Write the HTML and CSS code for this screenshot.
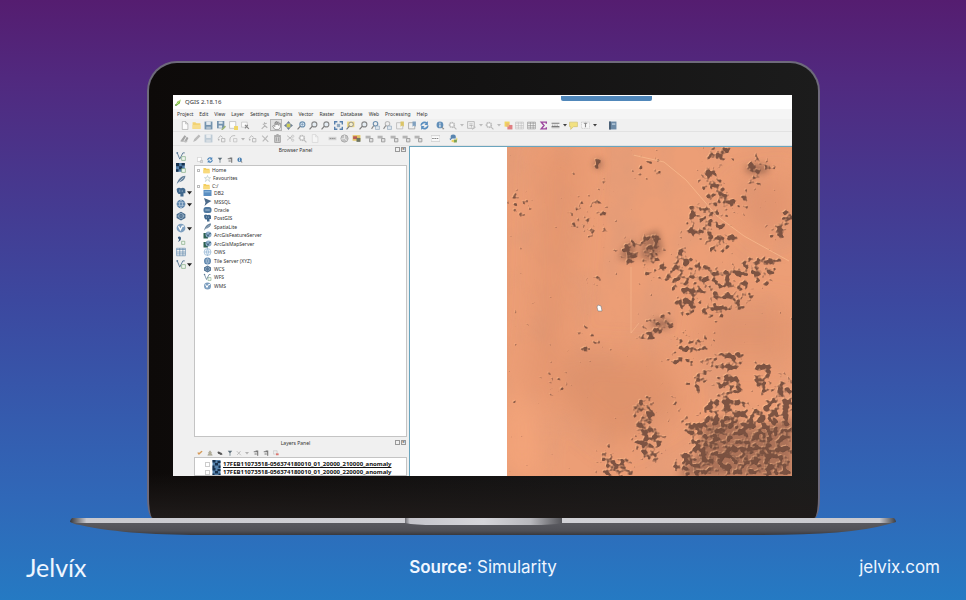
FILE: index.html
```html
<!DOCTYPE html>
<html lang="en">
<head>
<meta charset="utf-8">
<title>QGIS 2.18.16</title>
<link rel="stylesheet" href="styles.css">
</head>
<body>
<svg class="sprite" aria-hidden="true">
  <symbol id="page" viewBox="0 0 16 16"><path d="M4 1h6l4 4v10H4z" fill="#fff" stroke="#8a8a8a"/><path d="M10 1v4h4" fill="none" stroke="#8a8a8a"/></symbol>
  <symbol id="folder" viewBox="0 0 16 16"><path d="M1 2h5l2 2h7v10H1z" fill="#f3cd5c"/><path d="M1 7h14v7H1z" fill="#f8da7c"/></symbol>
  <symbol id="save" viewBox="0 0 16 16"><path d="M1 1h14v14H1z" fill="#5f83a3"/><path d="M4 1h8v6H4z" fill="#dfe8ef"/><path d="M4 10h8v4H4z" fill="#a9bccb"/></symbol>
  <symbol id="saveas" viewBox="0 0 16 16"><path d="M0 0h13v13H0z" fill="#5f83a3"/><path d="M3 1h7v4H3zM3 8h6v4H3z" fill="#dfe8ef"/><path d="M8 14l6-6 2 2-6 6H8z" fill="#8fa861"/></symbol>
  <symbol id="newcomp" viewBox="0 0 16 16"><path d="M1 1h11v12H1z" fill="#fff" stroke="#999"/><path d="M9 9h7v7H9z" fill="#f1d24d"/></symbol>
  <symbol id="addlayer" viewBox="0 0 16 16"><path d="M1 1h11v11H1z" fill="#fff" stroke="#aaa"/><path d="M9 9h6v6H9z" fill="#ddd" stroke="#999"/></symbol>
  <symbol id="compmgr" viewBox="0 0 16 16"><path d="M1 2h10v9H1z" fill="#fff" stroke="#aaa"/><path d="M7 7l7 7M12 7l-5 6" stroke="#777" stroke-width="2"/></symbol>
  <symbol id="touch" viewBox="0 0 16 16"><path d="M8 2v7l-5 5M8 8l5 4M5 6l7-2" fill="none" stroke="#aaa" stroke-width="2"/></symbol>
  <symbol id="hand" viewBox="0 0 16 16"><path d="M5 15L1 9l2-1 2 2V3l2-1v5V1h2v6l1-5h2v6l1-4h2v7l-3 4z" fill="#fff" stroke="#555"/></symbol>
  <symbol id="panto" viewBox="0 0 16 16"><path d="M8 0l4 5H4zM8 16l4-5H4zM0 8l5-4v8zM16 8l-5-4v8z" fill="#5b6f86"/><path d="M5 5h6v6H5z" fill="#c8c83e"/></symbol>
  <symbol id="lens" viewBox="0 0 16 16"><circle cx="9.500" cy="6" r="4.500" fill="#e4edf4" stroke="currentColor" stroke-width="2"/><path d="M6 9l-5 6" stroke="#666" stroke-width="2"/></symbol>
  <symbol id="lensplus" viewBox="0 0 16 16"><circle cx="9.500" cy="6" r="4.500" fill="#dbe8f3" stroke="currentColor" stroke-width="2"/><path d="M6 9l-5 6" stroke="#666" stroke-width="2"/><path d="M7 6h5M9.500 3.500v5" stroke="#4374a0"/></symbol>
  <symbol id="full" viewBox="0 0 16 16"><path d="M1 6V1h5M10 1h5v5M15 10v5h-5M6 15H1v-5" fill="none" stroke="#3d6da2" stroke-width="3"/><path d="M5 5h6v6H5z" fill="#7f9cb8"/></symbol>
  <symbol id="lensbox" viewBox="0 0 16 16"><path d="M2 1h13v10H2z" fill="#efd469"/><circle cx="9" cy="6" r="4" fill="#f7efc9" stroke="#777" stroke-width="1.500"/><path d="M6 9l-5 6" stroke="#666" stroke-width="2"/></symbol>
  <symbol id="lensnode" viewBox="0 0 16 16"><circle cx="8" cy="5" r="4" fill="#eee" stroke="currentColor" stroke-width="2"/><path d="M5 8l-4 6" stroke="#777" stroke-width="2"/><path d="M8 9h7v6H8z" fill="#dce6ee" stroke="#6c8ba8"/></symbol>
  <symbol id="bookmark" viewBox="0 0 16 16"><path d="M1 3h11v11H1z" fill="#f2f2f2" stroke="currentColor" stroke-width="1.500"/><path d="M8 1h6v9l-3-2-3 2z" fill="#d8bd50"/></symbol>
  <symbol id="bookmarks" viewBox="0 0 16 16"><path d="M1 3h11v11H1z" fill="#f2f2f2" stroke="#999" stroke-width="1.500"/><path d="M8 1h6v9l-3-2-3 2z" fill="#6d93b7"/></symbol>
  <symbol id="refresh" viewBox="0 0 16 16"><path d="M2 8a6 6 0 0 1 10-4M14 8a6 6 0 0 1-10 4" fill="none" stroke="#427fb8" stroke-width="3"/><path d="M14 0v7H8zM2 16V9h6z" fill="#427fb8"/></symbol>
  <symbol id="info" viewBox="0 0 16 16"><circle cx="7" cy="7" r="6" fill="#4a7fb0"/><path d="M6 3h2v2H6zM6 6h2v5H6z" fill="#fff"/><path d="M10 9l5 5-3 1z" fill="#777"/></symbol>
  <symbol id="gear" viewBox="0 0 16 16"><circle cx="7" cy="7" r="4.500" fill="#ddd" stroke="currentColor" stroke-width="2.500" stroke-dasharray="3 1"/><circle cx="7" cy="7" r="2" fill="#fff"/><path d="M10 10l5 5" stroke="currentColor" stroke-width="2"/></symbol>
  <symbol id="select" viewBox="0 0 16 16"><path d="M1 1h12v12H1z" fill="#eee" stroke="#aaa" stroke-width="1.500"/><path d="M4 5h6M4 8h5M7 7l8 4-4 1-1 3z" stroke="#999" fill="#fff"/></symbol>
  <symbol id="deselect" viewBox="0 0 16 16"><path d="M1 1h9v9H1z" fill="#f0d046"/><path d="M6 7h9v8H6z" fill="#dd6c70"/><path d="M4 4h5v6H4z" fill="#efb35f"/></symbol>
  <symbol id="table" viewBox="0 0 16 16"><path d="M1 2h14v12H1z" fill="#f4f4f4" stroke="currentColor"/><path d="M1 4h14M1 8h14M1 11h14M6 2v12M11 2v12" stroke="currentColor"/></symbol>
  <symbol id="sigma" viewBox="0 0 16 16"><path d="M13 5V2H4l5 6-5 6h9v-3" fill="none" stroke="#8d278f" stroke-width="2.500"/></symbol>
  <symbol id="measure" viewBox="0 0 16 16"><path d="M1 4h14M1 10h14" stroke="#666" stroke-width="2"/><path d="M1 12h14M3 6v3M7 6v3M11 6v3" stroke="#aaa" stroke-width="2"/></symbol>
  <symbol id="tip" viewBox="0 0 16 16"><path d="M1 2h14v8H8l-5 5v-5H1z" fill="#f2df6f" stroke="#c4b04c"/></symbol>
  <symbol id="text" viewBox="0 0 16 16"><path d="M1 2h14v11H1z" fill="#fafafa" stroke="#aaa" stroke-dasharray="2 1"/><path d="M5 4h6M8 4v7" stroke="#777" stroke-width="2"/></symbol>
  <symbol id="book" viewBox="0 0 16 16"><path d="M2 1h13v14H2z" fill="#56799b"/><path d="M2 1h3v14H2z" fill="#273e57"/><path d="M7 4h6v3H7z" fill="#a6bdd0"/></symbol>
  <symbol id="pencil" viewBox="0 0 16 16"><path d="M2 14l2-5 8-8 3 3-8 8z" fill="currentColor"/></symbol>
  <symbol id="pencils" viewBox="0 0 16 16"><path d="M1 12l7-10 3 2-6 10zM7 14l5-9 3 2-4 8z" fill="#999"/><path d="M1 12h12v2H1z" fill="#bbb"/></symbol>
  <symbol id="node" viewBox="0 0 16 16"><path d="M2 8l4-5 4 3" fill="none" stroke="currentColor" stroke-width="1.500"/><path d="M8 8h6v6H8z" fill="#eee" stroke="currentColor" stroke-width="1.500"/><circle cx="3" cy="10" r="1.500" fill="currentColor"/></symbol>
  <symbol id="curve" viewBox="0 0 16 16"><path d="M2 14C0 6 5 2 11 3" fill="none" stroke="currentColor" stroke-width="1.500"/><path d="M8 8h6v6H8z" fill="#eee" stroke="currentColor"/></symbol>
  <symbol id="cross" viewBox="0 0 16 16"><path d="M2 3l11 11M12 3l-4 5-5 5" stroke="currentColor" stroke-width="2"/></symbol>
  <symbol id="trash" viewBox="0 0 16 16"><path d="M3 4h10v11H3z" fill="#ccc" stroke="#888" stroke-width="1.500"/><path d="M2 3h12M6 1h4M6 6v7M10 6v7" stroke="#888" stroke-width="1.500"/></symbol>
  <symbol id="cut" viewBox="0 0 16 16"><path d="M2 3l9 7M2 11l9-7" stroke="#aaa" stroke-width="1.500"/><circle cx="12" cy="4" r="2" fill="none" stroke="#aaa"/><circle cx="12" cy="11" r="2" fill="none" stroke="#aaa"/></symbol>
  <symbol id="abc" viewBox="0 0 16 16"><path d="M1 5h14v6H1z" fill="#ccc"/><path d="M3 8h10" stroke="#888" stroke-width="2" stroke-dasharray="3 1"/></symbol>
  <symbol id="pie" viewBox="0 0 16 16"><circle cx="8" cy="8" r="6.500" fill="#bbb" stroke="#888"/><path d="M8 8V2M8 8l5 4M8 8l-6 1" stroke="#eee" stroke-width="1.500"/></symbol>
  <symbol id="label" viewBox="0 0 16 16"><path d="M1 2h14v10H1z" fill="#e2c150"/><path d="M2 4h7v5H2z" fill="#b2423c"/><path d="M8 7h7v7H8z" fill="#59614a"/></symbol>
  <symbol id="tag" viewBox="0 0 16 16"><path d="M1 3h9v5H1z" fill="#aaa"/><path d="M8 8h6v6H8z" fill="#ddd" stroke="#888" stroke-width="1.500"/></symbol>
  <symbol id="csw" viewBox="0 0 16 16"><path d="M0 3h16v10H0z" fill="#fff" stroke="#aaa"/><path d="M2 8h12" stroke="#777" stroke-width="2" stroke-dasharray="3 1"/></symbol>
  <symbol id="python" viewBox="0 0 16 16"><path d="M3 8V3q1-2 5-2t4 3v4H6q-2 0-3 3-2-1-2-3z" fill="#3e73a5"/><path d="M13 6v4H7q-3 0-3 3 1 2 5 2t4-3q2 0 2-3t-2-3z" fill="#eace4b"/><path d="M9 10h5v5H9z" fill="#67943e"/></symbol>
  <symbol id="vnode" viewBox="0 0 16 16"><path d="M2 3l4 10 5-10h3" fill="none" stroke="#5d7c96" stroke-width="1.500"/><path d="M9 9h6v6H9z" fill="#eef6ee" stroke="#78a378"/><circle cx="2" cy="3" r="1.500" fill="#5d7c96"/></symbol>
  <symbol id="raster" viewBox="0 0 16 16"><path d="M0 0h16v16H0z" fill="#5582ac"/><path d="M0 0h6v5H0zM10 2h6v4h-6zM5 6h6v5H5zM0 11h4v5H0zM12 11h4v5h-4z" fill="#17314e"/></symbol>
  <symbol id="rasteradd" viewBox="0 0 16 16"><path d="M0 0h14v14H0z" fill="#5582ac"/><path d="M0 0h5v5H0zM9 0h5v4H9zM5 5h5v5H5zM0 10h4v4H0z" fill="#17314e"/><path d="M9 9h6v6H9z" fill="#eef6ee" stroke="#78a378"/></symbol>
  <symbol id="feather" viewBox="0 0 16 16"><path d="M1 15C3 6 9 1 15 1c0 6-5 9-11 11z" fill="#65809a"/><path d="M1 15L12 4" stroke="#dce4ec"/></symbol>
  <symbol id="elephant" viewBox="0 0 16 16"><path d="M1 3q3-3 7-1 5-2 7 2v6h-3v5H7v-4H4q-3-2-3-8z" fill="#41688d"/><path d="M6 4v4M10 5v3" stroke="#a8bed2"/></symbol>
  <symbol id="globe" viewBox="0 0 16 16"><circle cx="8" cy="8" r="7" fill="#557fa8"/><path d="M2 6h12M2 10h12M8 1q-5 7 0 14M8 1q5 7 0 14" fill="none" stroke="#cad9e7"/></symbol>
  <symbol id="globelight" viewBox="0 0 16 16"><circle cx="8" cy="8" r="7" fill="#eef5fb" stroke="#7ba3c6"/><path d="M1 8h14M8 1q-5 7 0 14M8 1q5 7 0 14" fill="none" stroke="#7ba3c6"/></symbol>
  <symbol id="globedark" viewBox="0 0 16 16"><path d="M8 1l7 4v6l-7 4-7-4V5z" fill="#45688a"/><circle cx="8" cy="8" r="4" fill="none" stroke="#9ab3c9" stroke-width="1.500"/><path d="M1 8h14" stroke="#9ab3c9"/></symbol>
  <symbol id="globe2" viewBox="0 0 16 16"><circle cx="8" cy="8" r="7" fill="#7fa0c0"/><path d="M4 5l3 6 3-6h3" fill="none" stroke="#fff" stroke-width="2"/></symbol>
  <symbol id="comma" viewBox="0 0 16 16"><path d="M3 3q5-2 5 2t-5 6q2-3 2-4-2-1-2-4z" fill="#35597a"/><path d="M9 10h5v5H9z" fill="#eef6ee" stroke="#78a378"/></symbol>
  <symbol id="db" viewBox="0 0 16 16"><path d="M0 2h16v12H0z" fill="#5b8fc2"/><path d="M2 4h12v3H2z" fill="#85b0d8"/></symbol>
  <symbol id="mssql" viewBox="0 0 16 16"><path d="M1 0l15 6-7 4-7 6 2-7z" fill="#4d6b8a"/></symbol>
  <symbol id="oracle" viewBox="0 0 16 16"><rect y="2" width="16" height="12" rx="5" fill="#4f789f"/><rect x="3" y="6" width="10" height="4" rx="2" fill="#7c9dbb"/></symbol>
  <symbol id="star" viewBox="0 0 16 16"><path d="M8 1l2 5h5l-4 3 2 6-5-4-5 4 2-6-4-3h5z" fill="#fdfdf4" stroke="#9ab0bd"/></symbol>
  <symbol id="arcgis" viewBox="0 0 16 16"><path d="M0 4h9v11H0z" fill="#2d6252"/><circle cx="10" cy="7" r="6" fill="#8fb0cc"/><path d="M6 5l3 6 3-6h3" fill="none" stroke="#31556f" stroke-width="1.500"/></symbol>
  <symbol id="filter" viewBox="0 0 16 16"><path d="M2 2h12L9 8v7H7V8z" fill="#5b6d78"/></symbol>
  <symbol id="tree" viewBox="0 0 16 16"><path d="M2 3h6v3H2zM7 1h7v14h-3V6H7zM4 9h6v3H4z" fill="currentColor"/></symbol>
  <symbol id="eye" viewBox="0 0 16 16"><path d="M1 5q4-3 7 1 4 0 7 5-5 4-8 0Q2 11 1 5z" fill="#555"/></symbol>
  <symbol id="brush" viewBox="0 0 16 16"><path d="M1 8l4 5 10-9-3-2-7 6-2-3z" fill="#d69a58"/></symbol>
  <symbol id="person" viewBox="0 0 16 16"><path d="M8 2l4 5-1 2 3 5H2l3-5-1-2z" fill="#b5b19d" stroke="#858171"/></symbol>
  <symbol id="remove" viewBox="0 0 16 16"><path d="M1 2h10v9H1z" fill="#eee" stroke="#aaa"/><path d="M8 9h7v5H8z" fill="#dd7770"/></symbol>
  <symbol id="down" viewBox="0 0 8 8"><path d="M0 2h8L4 7z" fill="currentColor"/></symbol>
  <symbol id="logo" viewBox="0 0 16 16"><path d="M1 16L5 6l8-5-2 9z" fill="#7bbd34"/><path d="M1 16L12 2" stroke="#e5efcc" stroke-width="1.500"/><path d="M0 12l7 1-6 3z" fill="#4c8b28"/></symbol>
</svg>

<main class="stage">
  <section class="lid" aria-label="Laptop">
    <div class="screen">
      <header class="titlebar">
        <svg class="icon"><use href="#logo"/></svg>
        <span class="title">QGIS 2.18.16</span>
        <i class="tab"></i>
      </header>
      <nav class="menu">
        <a href="#project">Project</a><a href="#edit">Edit</a><a href="#view">View</a><a href="#layer">Layer</a><a href="#settings">Settings</a><a href="#plugins">Plugins</a><a href="#vector">Vector</a><a href="#raster-menu">Raster</a><a href="#database">Database</a><a href="#web">Web</a><a href="#processing">Processing</a><a href="#help">Help</a>
      </nav>
      <div class="toolbar">
        <div class="group six">
          <button aria-label="New"><svg><use href="#page"/></svg></button>
          <button aria-label="Open"><svg><use href="#folder"/></svg></button>
          <button aria-label="Save"><svg><use href="#save"/></svg></button>
          <button aria-label="Save as"><svg><use href="#saveas"/></svg></button>
          <button aria-label="New composer"><svg><use href="#newcomp"/></svg></button>
          <button aria-label="Composer manager"><svg><use href="#compmgr"/></svg></button>
        </div>
        <div class="group fourteen">
          <button aria-label="Touch"><svg><use href="#touch"/></svg></button>
          <button class="on" aria-label="Pan"><svg><use href="#hand"/></svg></button>
          <button aria-label="Pan to selection"><svg><use href="#panto"/></svg></button>
          <button class="blue" aria-label="Zoom in"><svg><use href="#lensplus"/></svg></button>
          <button aria-label="Zoom out"><svg><use href="#lens"/></svg></button>
          <button aria-label="Zoom native"><svg><use href="#lens"/></svg></button>
          <button aria-label="Zoom full"><svg><use href="#full"/></svg></button>
          <button aria-label="Zoom to selection"><svg><use href="#lensbox"/></svg></button>
          <button aria-label="Zoom to layer"><svg><use href="#lens"/></svg></button>
          <button class="blue" aria-label="Zoom last"><svg><use href="#lensnode"/></svg></button>
          <button class="pale" aria-label="Zoom next"><svg><use href="#lensnode"/></svg></button>
          <button class="pale" aria-label="New bookmark"><svg><use href="#bookmark"/></svg></button>
          <button aria-label="Bookmarks"><svg><use href="#bookmarks"/></svg></button>
          <button aria-label="Refresh"><svg><use href="#refresh"/></svg></button>
        </div>
        <div class="group attributes">
          <button aria-label="Identify"><svg><use href="#info"/></svg></button>
          <button class="pale drop" aria-label="Actions"><svg><use href="#gear"/></svg><svg class="caret"><use href="#down"/></svg></button>
          <button class="pale drop" aria-label="Select"><svg><use href="#select"/></svg><svg class="caret"><use href="#down"/></svg></button>
          <button class="pale drop" aria-label="Select by expression"><svg><use href="#gear"/></svg><svg class="caret"><use href="#down"/></svg></button>
          <button aria-label="Deselect"><svg><use href="#deselect"/></svg></button>
          <button class="pale" aria-label="Attribute table"><svg><use href="#table"/></svg></button>
          <button aria-label="Field calculator"><svg><use href="#table"/></svg></button>
          <button aria-label="Statistics"><svg><use href="#sigma"/></svg></button>
          <button class="dark drop" aria-label="Measure"><svg><use href="#measure"/></svg><svg class="caret"><use href="#down"/></svg></button>
          <button aria-label="Map tips"><svg><use href="#tip"/></svg></button>
          <button class="dark drop" aria-label="Annotation"><svg><use href="#text"/></svg><svg class="caret"><use href="#down"/></svg></button>
        </div>
        <div class="group"><button aria-label="Help contents"><svg><use href="#book"/></svg></button></div>
      </div>
      <div class="toolbar second">
        <div class="group editing">
          <button aria-label="Current edits"><svg><use href="#pencils"/></svg></button>
          <button class="pale" aria-label="Toggle editing"><svg><use href="#pencil"/></svg></button>
          <button class="washed" aria-label="Save edits"><svg><use href="#save"/></svg></button>
          <button aria-label="Add feature"><svg><use href="#node"/></svg></button>
          <button class="drop" aria-label="Add circular string"><svg><use href="#curve"/></svg><svg class="caret"><use href="#down"/></svg></button>
          <button aria-label="Move feature"><svg><use href="#node"/></svg></button>
          <button class="pale" aria-label="Node tool"><svg><use href="#cross"/></svg></button>
          <button aria-label="Delete selected"><svg><use href="#trash"/></svg></button>
          <button aria-label="Cut"><svg><use href="#cut"/></svg></button>
          <button class="pale" aria-label="Copy"><svg><use href="#gear"/></svg></button>
          <button class="washed" aria-label="Paste"><svg><use href="#page"/></svg></button>
        </div>
        <div class="group eight">
          <button aria-label="Labels"><svg><use href="#abc"/></svg></button>
          <button aria-label="Diagrams"><svg><use href="#pie"/></svg></button>
          <button aria-label="Highlight labels"><svg><use href="#label"/></svg></button>
          <button aria-label="Pin labels"><svg><use href="#tag"/></svg></button>
          <button aria-label="Show labels"><svg><use href="#tag"/></svg></button>
          <button aria-label="Move label"><svg><use href="#tag"/></svg></button>
          <button aria-label="Rotate label"><svg><use href="#tag"/></svg></button>
          <button aria-label="Change label"><svg><use href="#tag"/></svg></button>
        </div>
        <div class="group"><button aria-label="Metadata search"><svg><use href="#csw"/></svg></button></div>
        <div class="group"><button aria-label="Python console"><svg><use href="#python"/></svg></button></div>
      </div>

      <div class="workspace">
        <aside class="layerbar">
          <button aria-label="Add vector layer"><svg><use href="#vnode"/></svg></button>
          <button aria-label="Add raster layer"><svg><use href="#rasteradd"/></svg></button>
          <button aria-label="Add SpatiaLite layer"><svg><use href="#feather"/></svg></button>
          <button class="drop" aria-label="Add PostGIS layer"><svg><use href="#elephant"/></svg><svg class="caret"><use href="#down"/></svg></button>
          <button class="drop" aria-label="Add WMS layer"><svg><use href="#globe"/></svg><svg class="caret"><use href="#down"/></svg></button>
          <button aria-label="Add WCS layer"><svg><use href="#globedark"/></svg></button>
          <button class="drop" aria-label="Add WFS layer"><svg><use href="#globe2"/></svg><svg class="caret"><use href="#down"/></svg></button>
          <button aria-label="Add delimited text layer"><svg><use href="#comma"/></svg></button>
          <button class="blue" aria-label="Add virtual layer"><svg><use href="#table"/></svg></button>
          <button class="drop" aria-label="New layer"><svg><use href="#vnode"/></svg><svg class="caret"><use href="#down"/></svg></button>
        </aside>
        <div class="docks">
          <section class="dock browser">
            <h2>Browser Panel</h2><span class="controls"><button aria-label="Float browser"></button><button aria-label="Close browser">×</button></span>
            <div class="tools">
              <button aria-label="Add layers"><svg><use href="#addlayer"/></svg></button>
              <button aria-label="Refresh browser"><svg><use href="#refresh"/></svg></button>
              <button aria-label="Filter browser"><svg><use href="#filter"/></svg></button>
              <button aria-label="Collapse all"><svg><use href="#tree"/></svg></button>
              <button aria-label="Properties"><svg><use href="#info"/></svg></button>
            </div>
            <div class="list">
              <ul class="places">
                <li><i class="expand"></i><svg><use href="#folder"/></svg>Home</li>
                <li class="fav"><svg><use href="#star"/></svg>Favourites</li>
                <li><i class="expand"></i><svg><use href="#folder"/></svg>C:/</li>
              </ul>
              <ul class="servers">
                <li><svg><use href="#db"/></svg>DB2</li>
                <li><svg><use href="#mssql"/></svg>MSSQL</li>
                <li><svg><use href="#oracle"/></svg>Oracle</li>
                <li><svg><use href="#elephant"/></svg>PostGIS</li>
                <li><svg><use href="#feather"/></svg>SpatiaLite</li>
                <li><svg><use href="#arcgis"/></svg>ArcGisFeatureServer</li>
                <li><svg><use href="#arcgis"/></svg>ArcGisMapServer</li>
                <li><svg><use href="#globelight"/></svg>OWS</li>
                <li><svg><use href="#globe"/></svg>Tile Server (XYZ)</li>
                <li><svg><use href="#globedark"/></svg>WCS</li>
                <li><svg><use href="#vnode"/></svg>WFS</li>
                <li><svg><use href="#globe2"/></svg>WMS</li>
              </ul>
            </div>
          </section>
          <section class="dock layers">
            <h2>Layers Panel</h2><span class="controls"><button aria-label="Float layers"></button><button aria-label="Close layers">×</button></span>
            <div class="tools">
              <button aria-label="Style"><svg><use href="#brush"/></svg></button>
              <button aria-label="Add group"><svg><use href="#person"/></svg></button>
              <button aria-label="Visibility"><svg><use href="#eye"/></svg></button>
              <button aria-label="Filter legend"><svg><use href="#filter"/></svg></button>
              <button class="pale drop" aria-label="Filter by expression"><svg><use href="#cross"/></svg><svg class="caret"><use href="#down"/></svg></button>
              <button aria-label="Expand all"><svg><use href="#tree"/></svg></button>
              <button aria-label="Collapse layers"><svg><use href="#tree"/></svg></button>
              <button aria-label="Remove layer"><svg><use href="#remove"/></svg></button>
            </div>
            <ul class="list entries">
              <li><input type="checkbox" id="layer-a"><svg><use href="#raster"/></svg><label for="layer-a">17FEB11073518-056374180010_01_20000_210000_anomaly</label></li>
              <li><input type="checkbox" id="layer-b"><svg><use href="#raster"/></svg><label for="layer-b">17FEB11073518-056374180010_01_20000_220000_anomaly</label></li>
            </ul>
          </section>
        </div>
        <section class="canvas" aria-label="Map canvas">
          <svg class="map" viewBox="0 0 285 329" preserveAspectRatio="xMidYMid slice" role="img" aria-label="Satellite image of a desert">
            <defs>
              <filter id="rocks" filterUnits="userSpaceOnUse" x="0" y="0" width="285" height="329" color-interpolation-filters="sRGB">
                <feGaussianBlur in="SourceAlpha" stdDeviation="3" result="area"/>
                <feTurbulence type="fractalNoise" baseFrequency="0.17" numOctaves="2" seed="11"/>
                <feColorMatrix values="0 0 0 0 0  0 0 0 0 0  0 0 0 0 0  1 0 0 0 0" result="noise"/>
                <feComposite in="noise" in2="area" operator="arithmetic" k2="1" k3="0.38" k4="-0.4"/>
                <feComponentTransfer result="mask"><feFuncA type="linear" slope="7" intercept="-2.8"/></feComponentTransfer>
                <feFlood flood-color="#704a3c" flood-opacity=".9"/><feComposite in2="mask" operator="in" result="dark"/>
                <feOffset in="mask" dx="-1" dy="-1" result="shift"/>
                <feFlood flood-color="#ffc190" flood-opacity="0.5"/><feComposite in2="shift" operator="in" result="light"/>
                <feMerge><feMergeNode in="light"/><feMergeNode in="dark"/></feMerge>
              </filter>
              <filter id="soft" x="-50%" y="-50%" width="200%" height="200%"><feGaussianBlur stdDeviation="14"/></filter>
              <filter id="smudge" x="-50%" y="-50%" width="200%" height="200%"><feGaussianBlur stdDeviation="3"/></filter>
              <filter id="grain" x="0" y="0" width="100%" height="100%"><feTurbulence type="fractalNoise" baseFrequency="0.03 0.02" numOctaves="5" seed="4"/><feColorMatrix values="0 0 0 0 .6  0 0 0 0 .3  0 0 0 0 .2  1.200 0 0 0 -.45"/></filter>
            </defs>
            <rect width="285" height="329" fill="#ec9e76"/>
            <rect width="285" height="329" filter="url(#grain)" opacity=".45"/>
            <g filter="url(#soft)">
              <path d="M35 0h40L55 220 10 329 30 160z" fill="#dd9068" opacity=".5"/>
              <path d="M65 205l90 5 20 50-65 40-60-50z" fill="#d98c66" opacity=".6"/>
              <path d="M225 40l60-10v50l-30 10z" fill="#dc8d69" opacity=".6"/>
              <path d="M200 160h85v50h-90z" fill="#dc8f6a" opacity=".6"/>
              <path d="M0 250h30v79H0z" fill="#f4a57a"/>
            </g>
            <g filter="url(#smudge)" fill="#79503f" opacity=".55">
              <path d="M112 112q5-18 17-17l-2 18z"/><path d="M133 111l4-22 14-6 5 20-12 11z"/>
              <ellipse cx="154" cy="177" rx="10" ry="5"/><ellipse cx="250" cy="22" rx="12" ry="5"/><ellipse cx="91" cy="17" rx="4" ry="5"/>
              <path d="M198 275l28-6 14 14 45-12v58H170l20-20z"/>
            </g>
            <g filter="url(#rocks)">
              <g opacity=".5">
                <ellipse cx="14" cy="56" rx="14" ry="14"/><ellipse cx="82" cy="70" rx="24" ry="22"/><ellipse cx="140" cy="22" rx="18" ry="13"/>
                <ellipse cx="88" cy="130" rx="12" ry="8"/><ellipse cx="82" cy="195" rx="14" ry="16"/><ellipse cx="48" cy="236" rx="15" ry="13"/><ellipse cx="7" cy="165" rx="7" ry="8"/>
              </g>
              <g opacity=".8">
                <ellipse cx="92" cy="17" rx="7" ry="8"/><ellipse cx="100" cy="33" rx="8" ry="4"/>
                <ellipse cx="198" cy="75" rx="23" ry="20"/><ellipse cx="214" cy="95" rx="20" ry="14"/>
                <path d="M170 100l18 12 40 12 20 25-15 15-28-10-38-5-12-20z"/>
                <ellipse cx="207" cy="165" rx="14" ry="10"/><ellipse cx="185" cy="195" rx="25" ry="9"/>
                <ellipse cx="175" cy="212" rx="14" ry="9"/><ellipse cx="192" cy="235" rx="12" ry="9"/>
                <ellipse cx="205" cy="38" rx="13" ry="14"/><ellipse cx="238" cy="55" rx="8" ry="8"/><ellipse cx="148" cy="123" rx="14" ry="8"/>
                <ellipse cx="248" cy="125" rx="25" ry="17"/><ellipse cx="170" cy="253" rx="5" ry="9"/><ellipse cx="100" cy="307" rx="8" ry="12"/>
              </g>
              <ellipse cx="213" cy="8" rx="14" ry="9"/><ellipse cx="200" cy="24" rx="9" ry="7"/><ellipse cx="213" cy="45" rx="8" ry="13"/><ellipse cx="222" cy="57" rx="8" ry="7"/>
              <ellipse cx="250" cy="20" rx="14" ry="9"/><ellipse cx="246" cy="34" rx="7" ry="7"/><ellipse cx="280" cy="71" rx="8" ry="11"/><ellipse cx="269" cy="86" rx="11" ry="8"/>
              <ellipse cx="122" cy="105" rx="10" ry="13"/><ellipse cx="145" cy="100" rx="11" ry="15"/><ellipse cx="174" cy="112" rx="8" ry="13"/>
              <ellipse cx="180" cy="157" rx="13" ry="11"/><ellipse cx="155" cy="176" rx="14" ry="8"/><ellipse cx="142" cy="187" rx="10" ry="7"/>
              <ellipse cx="262" cy="115" rx="10" ry="8"/><ellipse cx="203" cy="216" rx="9" ry="10"/><ellipse cx="226" cy="213" rx="12" ry="11"/><ellipse cx="222" cy="237" rx="14" ry="14"/>
              <ellipse cx="256" cy="230" rx="10" ry="18"/><ellipse cx="278" cy="250" rx="11" ry="22"/>
              <ellipse cx="137" cy="266" rx="12" ry="18"/><ellipse cx="142" cy="296" rx="16" ry="20"/><ellipse cx="109" cy="321" rx="17" ry="11"/>
              <path d="M166 264l26 10 5-20 24-8 22 14 20-8 22 10v67H165l3-20 17-8-8-20z"/>
            </g>
            <path d="M126 8l31 7 22 18 31 36 27 20 45 25" fill="none" stroke="#fbc092" opacity=".65"/>
            <path d="M124 120v66l8-10" fill="none" stroke="#ffc89a" opacity=".4"/>
            <path d="M90 160l1-2 3 1 1 5h-4z" fill="#fff" stroke="#65717a" stroke-width=".5"/>
          </svg>
        </section>
      </div>
    </div>
  </section>
  <svg class="base" viewBox="0 0 826 17" preserveAspectRatio="none" aria-hidden="true">
    <defs>
      <linearGradient id="under" x2="0" y2="1"><stop stop-color="#5b5b61"/><stop offset=".7" stop-color="#505056"/><stop offset="1" stop-color="#38383d"/></linearGradient>
      <linearGradient id="edge"><stop stop-color="#35363a"/><stop offset=".02" stop-color="#c9c9ce"/><stop offset=".5" stop-color="#d2d2d7"/><stop offset=".98" stop-color="#c9c9ce"/><stop offset="1" stop-color="#3c3d42"/></linearGradient>
      <linearGradient id="notch"><stop stop-color="#6d6d72"/><stop offset=".03" stop-color="#c4c4ca"/><stop offset=".5" stop-color="#d5d5da"/><stop offset=".8" stop-color="#b8b8bd"/><stop offset="1" stop-color="#55555a"/></linearGradient>
    </defs>
    <path d="M0 3q2 3 10 4c35 8 80 10 130 10h550q90 0 125-10 9-2 11-4z" fill="url(#under)"/>
    <path d="M2 0h822q2 2 2 4l-3 1H3L0 4q0-2 2-4z" fill="url(#edge)"/>
    <path d="M335 0h157v5q-10 2-30 2H365q-20 0-30-2z" fill="url(#notch)"/>
  </svg>
  <footer class="caption">
    <span class="brand">Jelvíx</span>
    <p class="source"><strong>Source</strong>: Simularity</p>
    <a class="site" href="#jelvix">jelvix.com</a>
  </footer>
</main>
</body>
</html>
```
FILE: styles.css
```css
* { box-sizing: border-box; }
body { margin: 0; font-family: "Noto Sans", sans-serif; }
.sprite { position: absolute; width: 0; height: 0; }
button { display: flex; align-items: center; justify-content: center; border: 0; padding: 0; background: none; font: inherit; color: #777; }
ul, h2, p { margin: 0; padding: 0; list-style: none; font-weight: 400; }
a { color: inherit; text-decoration: none; }

.stage {
  min-height: 100vh;
  display: flex;
  flex-direction: column;
  padding-top: 61px;
  background: linear-gradient(#551d70, #51297f 13%, #3c489f 50%, #3068b8 83%, #257ac3);
}
.lid {
  flex: 1;
  display: flex;
  min-height: 400px;
  margin: 0 146px 0 147px;
  padding: 32px 26px 42px 24px;
  border: 2px solid #6e6a7b;
  border-bottom: 0;
  border-radius: 30px 30px 6px 6px / 30px 30px 20px 20px;
  background: linear-gradient(#0c0a0a00 90%, #1f1b1a), linear-gradient(90deg, #0d0a09, #131212 50%, #1c1c1c);
}
.screen { flex: 1; min-width: 0; display: flex; flex-direction: column; overflow: hidden; background: #f0f0f0; color: #333; font-size: 5px; line-height: 8px; }
.titlebar { position: relative; display: flex; align-items: center; gap: 3px; height: 14px; padding-left: 2px; background: #fff; font-size: 6px; }
.titlebar .icon { width: 7px; height: 9px; }
.tab { position: absolute; left: 388px; top: 1px; width: 91px; height: 5px; border-radius: 0 0 2px 2px; background: #5087ba; }
.menu { display: flex; gap: 6px; height: 10px; align-items: center; padding-left: 4px; background: #f5f5f5; }

.toolbar { display: flex; align-items: center; height: 13px; padding-left: 5px; border-bottom: 1px solid #e2e2e2; }
.toolbar.second { height: 14px; }
.group { display: flex; justify-content: space-between; margin-right: 6px; }
.toolbar svg { width: 9px; height: 9px; opacity: .85; }
.toolbar button { width: 12px; height: 12px; }
.six { width: 74px; }
.fourteen { width: 173px; margin-right: 4px; }
.attributes { width: 163px; margin-right: 8px; }
.editing { width: 143px; margin-right: 5px; }
.eight { width: 99px; margin-right: 4px; }
.toolbar .drop, .tools .drop { width: 19px; gap: 3px; }
.toolbar .caret, .tools .caret, .layerbar .caret { width: 4px; height: 4px; }
.second button { color: #aaa; }
.second .washed { opacity: .4; }
.toolbar .pale, .tools .pale { color: #b2b2b2; }
.toolbar .blue, .layerbar .blue { color: #5680a6; }
.toolbar .dark { color: #222; }
.toolbar .on { background: #dfdfdf; outline: 1px solid #b5b5b5; outline-offset: -1px; }

.workspace { flex: 1; display: flex; min-height: 0; }
.layerbar { display: flex; flex-direction: column; width: 21px; padding: 4px 0 0 3px; }
.layerbar button { justify-content: flex-start; gap: 1px; height: 12px; color: #222; }
.layerbar svg { width: 10px; height: 10px; }
.layerbar .caret { width: 5px; height: 5px; }
.docks { display: flex; flex-direction: column; width: 213px; margin-right: 2px; }
.dock { position: relative; display: flex; flex-direction: column; }
.browser { flex: 1; margin-bottom: 2px; }
.dock h2 { height: 9px; padding-right: 10px; text-align: center; font-size: 5px; line-height: 9px; }
.controls { position: absolute; top: 1px; right: 1px; display: flex; gap: 1px; }
.controls button { width: 5px; height: 5px; border: 1px solid #999; font-size: 5px; line-height: 3px; color: #333; }
.tools { display: flex; align-items: center; gap: 1px; height: 10px; padding-left: 1px; color: #708091; }
.tools button { width: 9px; height: 9px; }
.tools svg { width: 6px; height: 6px; }
.tools .drop { width: 15px; }
.list { border: 1px solid #c4c4c4; background: #fff; color: #333; }
.browser .list { flex: 1; }
.list li { display: flex; align-items: center; white-space: nowrap; }
.places { display: grid; height: 23px; grid-auto-rows: 1fr; padding-left: 2px; }
.places svg { width: 7px; height: 7px; margin: 0 2px 0 3px; }
.places .fav { padding-left: 4px; }
.expand { width: 3px; height: 3px; border: 1px solid #bbb; }
.servers { display: grid; height: 101px; grid-auto-rows: 1fr; padding-left: 8px; }
.servers svg { width: 9px; height: 8px; margin-right: 2px; }
.layers { height: 37px; overflow: hidden; }
.entries { height: 20px; padding: 2px 0 0 10px; overflow: hidden; font-size: 6px; font-weight: 700; }
.entries li { height: 8px; text-decoration: underline; color: #111; }
.entries input { appearance: none; width: 5px; height: 5px; margin: 0 2px 0 0; border: 1px solid #ccc; }
.entries svg { width: 9px; height: 8px; margin-right: 2px; }

.canvas { flex: 1; display: flex; min-width: 0; border: 1px solid #6aa5be; border-width: 1px 0 0 1px; background: #fff; }
.map { flex: 1; min-width: 0; height: 100%; margin-left: 97px; }

.base { display: block; width: auto; height: 17px; margin: 0 70px; }
.caption { display: grid; grid-template-columns: 1fr auto 1fr; align-items: center; height: 66px; padding: 0 26px 2px; color: #eff6ff; font: 17px/24px Inter, sans-serif; }
.caption strong { font-weight: 600; }
.brand { font: 400 25px/28px Lato, sans-serif; }
.site { justify-self: end; }
```
